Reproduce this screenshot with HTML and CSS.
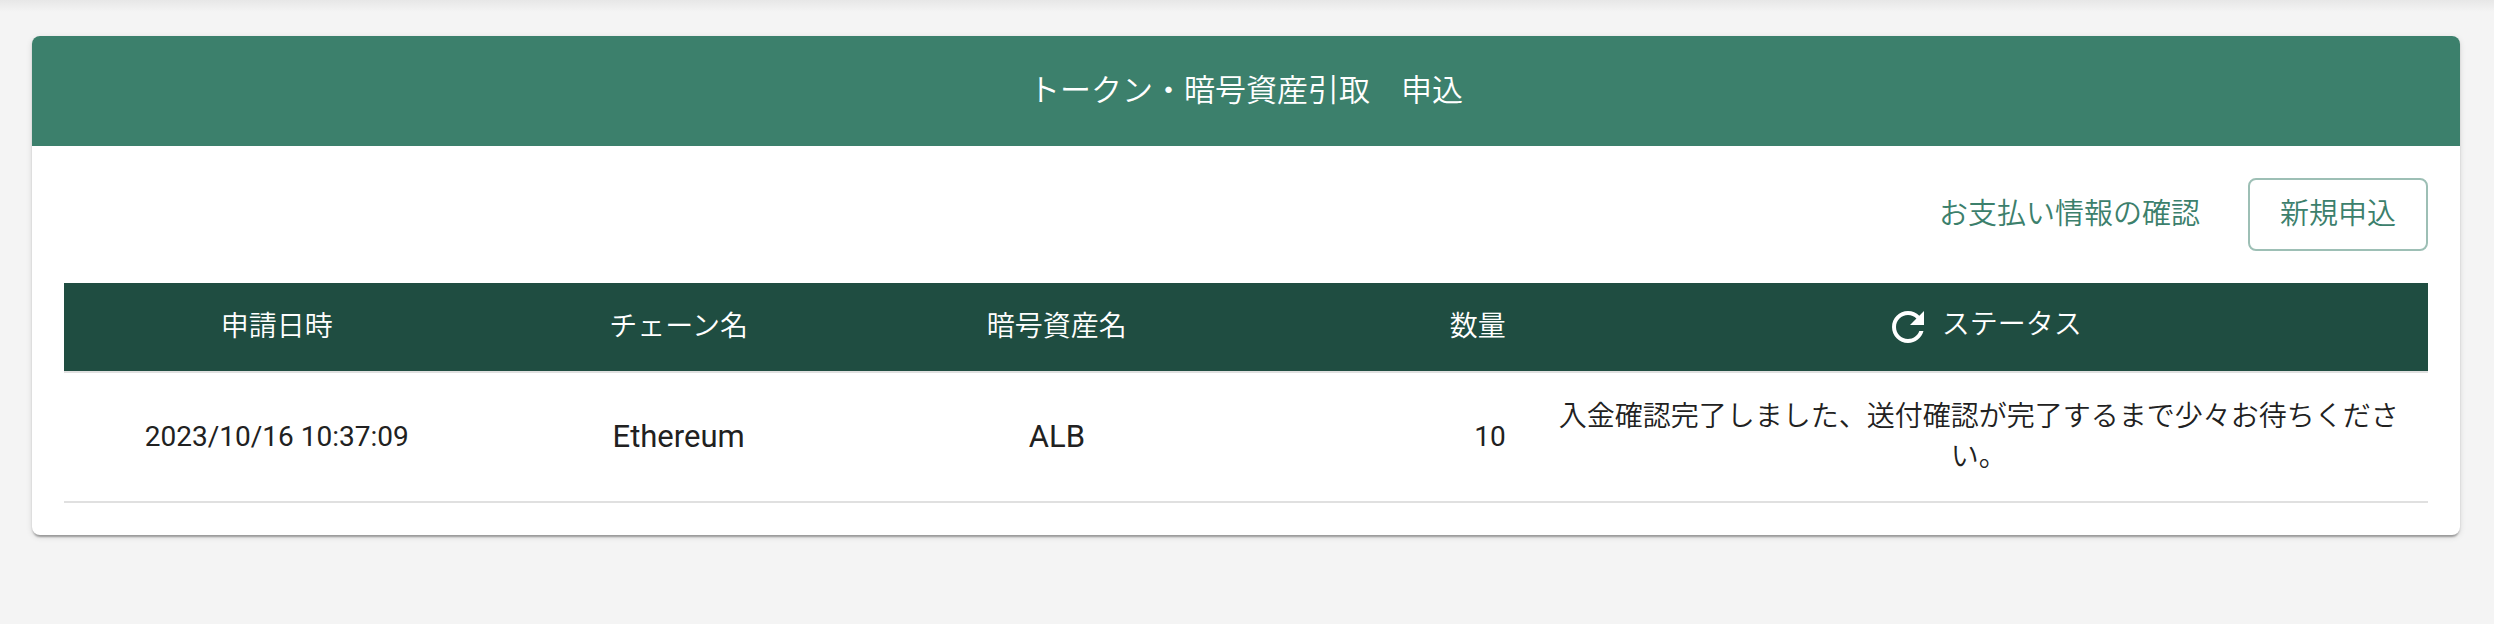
FILE: index.html
```html
<!DOCTYPE html>
<html lang="ja">
<head>
    <meta charset="UTF-8">
    <meta name="viewport" content="width=device-width, initial-scale=1.0">
    <title>トークン・暗号資産引取 申込</title>
    <link rel="stylesheet" href="styles.css">
</head>
<body>
    <main class="card">
        <h1 class="card-title">トークン・暗号資産引取　申込</h1>

        <div class="card-body">
            <div class="actions">
                <button type="button" class="btn">お支払い情報の確認</button>
                <button type="button" class="btn btn-outlined">新規申込</button>
            </div>

            <table class="orders">
                <thead>
                    <tr>
                        <th class="col-date">申請日時</th>
                        <th class="col-name">チェーン名</th>
                        <th class="col-name">暗号資産名</th>
                        <th class="col-amount">数量</th>
                        <th class="col-status">
                            <div class="status-head">
                                <button type="button" class="refresh" aria-label="更新">
                                    <svg width="48" height="48" viewBox="0 0 24 24" fill="currentColor">
                                        <path d="M17.65 6.35C16.2 4.9 14.21 4 12 4c-4.42 0-7.99 3.58-7.99 8s3.57 8 7.99 8c3.73 0 6.84-2.55 7.73-6h-2.08c-.82 2.33-3.04 4-5.65 4-3.31 0-6-2.69-6-6s2.69-6 6-6c1.66 0 3.14.69 4.22 1.78L13 11h7V4l-2.35 2.35z"/>
                                    </svg>
                                </button>
                                <span class="status-label">ステータス</span>
                            </div>
                        </th>
                    </tr>
                </thead>
                <tbody>
                    <tr>
                        <td>2023/10/16 10:37:09</td>
                        <td class="asset">Ethereum</td>
                        <td class="asset">ALB</td>
                        <td class="col-amount">10</td>
                        <td class="message">入金確認完了しました、送付確認が完了するまで少々お待ちください。</td>
                    </tr>
                </tbody>
            </table>
        </div>
    </main>
</body>
</html>
```
FILE: styles.css
```css
* {
    box-sizing: border-box;
}
body {
    margin: 0;
    padding: 36px 34px 36px 32px;
    background: #f4f4f4 linear-gradient(#e7e7e7, #f4f4f4) no-repeat top / 100% 12px;
    color: #212121;
    font-family: Roboto, "Noto Sans CJK JP", sans-serif;
    font-size: 28px;
    line-height: 40px;
}
.card {
    background-color: #ffffff;
    border-radius: 8px;
    overflow: hidden;
    box-shadow: 0 4px 2px -2px rgba(0, 0, 0, 0.2), 0 2px 2px rgba(0, 0, 0, 0.14), 0 2px 6px rgba(0, 0, 0, 0.12);
}
.card-title {
    margin: 0;
    padding: 32px;
    background-color: #3c806c;
    color: #ffffff;
    font-size: 31px;
    font-weight: 350;
    line-height: 46px;
    text-align: center;
}
.card-body {
    padding: 32px;
}
.actions {
    display: flex;
    justify-content: flex-end;
    gap: 16px;
    margin-bottom: 32px;
}
.btn {
    padding: 15px 30px;
    border: 2px solid transparent;
    border-radius: 8px;
    background: none;
    color: #3c806c;
    font-family: inherit;
    font-size: 29px;
    font-weight: 350;
    line-height: 39px;
    cursor: pointer;
}
.btn-outlined {
    border-color: #9dbfb5;
}

/* Orders table */
.orders {
    width: 100%;
    table-layout: fixed;
    border-collapse: separate;
    border-spacing: 0;
    text-align: center;
}
.orders th, .orders td {
    padding: 24px;
    border-bottom: 2px solid #e0e0e0;
}
.orders th {
    background-color: #1f4d41;
    background-clip: padding-box;
    color: #ffffff;
    font-weight: 350;
}
.orders .asset {
    font-size: 31px;
}
.orders .message {
    font-weight: 350;
}
.orders .col-amount {
    text-align: right;
}
.col-date {
    width: 18%;
}
.col-name {
    width: 16%;
}
.col-amount {
    width: 12%;
}
.col-status {
    width: 38%;
}
.status-head {
    display: flex;
    justify-content: center;
    gap: 10px;
    height: 40px;
    padding-left: 8px;
}
.status-label {
    line-height: 36px;
}
.refresh {
    display: flex;
    align-items: center;
    padding: 0;
    border: 0;
    background: none;
    color: inherit;
    cursor: pointer;
}
```
